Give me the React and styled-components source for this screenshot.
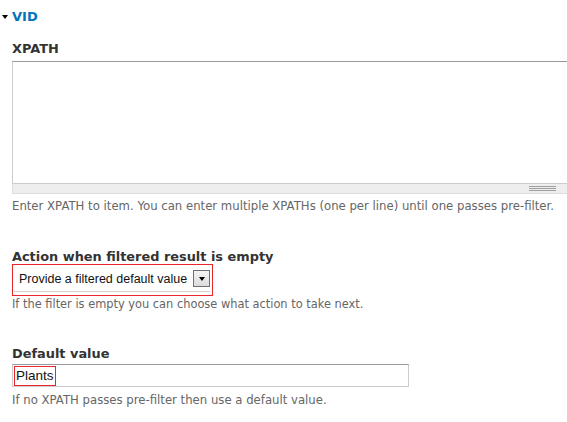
import React from 'react'
import styled, { createGlobalStyle } from 'styled-components'

const GlobalStyle = createGlobalStyle`
  html, body {
    margin: 0;
    padding: 0;
    background: #fff;
    overflow: hidden;
  }
  body {
    font-family: "DejaVu Sans", Verdana, sans-serif;
  }
`;

const Page = styled.div`
  padding: 7px 0 0 2px;
`;

const Legend = styled.div`
  display: flex;
  align-items: center;
  gap: 4px;
  height: 18px;
  color: #0074bd;
  font-size: 13px;
  font-weight: bold;
`;

const Arrow = styled.span`
  width: 0;
  height: 0;
  margin-top: 1px;
  border-left: 3px solid transparent;
  border-right: 3px solid transparent;
  border-top: 4px solid #000;
`;

const FieldsetBody = styled.div`
  padding-left: 10px;
`;

const FormItem = styled.div`
  margin-top: ${props => props.top}px;
`;

const Label = styled.div`
  color: #333;
  font-size: 12.9px;
  font-weight: bold;
  line-height: 14px;
  margin-bottom: ${props => props.gap}px;
`;

const Description = styled.div`
  color: #666;
  font-size: ${props => props.size || 11.7}px;
  line-height: 14px;
  white-space: nowrap;
  margin-top: ${props => props.top}px;
`;

/* the textarea runs on past the right edge of the window, so no right border */
const TextArea = styled.div`
  width: 555px;
  box-sizing: border-box;
  height: 123px;
  border: 1px solid #ccc;
  border-right: none;
  border-top-color: #999;
  background: #fff;
`;

const Grippie = styled.div`
  width: 555px;
  box-sizing: border-box;
  height: 10px;
  background: #eee;
  border: 1px solid #ddd;
  border-top: none;
  border-right: none;
  display: flex;
  justify-content: flex-end;
  align-items: center;
  padding-right: 11px;
`;

const GrippieLines = styled.span`
  width: 27px;
  height: 5px;
  background: repeating-linear-gradient(#a0a0a0 0 1px, transparent 1px 2px);
`;

const SelectFrame = styled.div`
  width: 201px;
  height: 32px;
  box-sizing: border-box;
  border: 1px solid #e8262b;
  padding: 0 2px 3px 1px;
`;

const Select = styled.div`
  height: 27px;
  box-sizing: border-box;
  border-bottom: 1px solid #d4d4d4;
  display: flex;
  align-items: center;
  justify-content: space-between;
  padding: 1px 0 0 5px;
  font-family: "Liberation Sans", Arial, sans-serif;
  font-size: 12.5px;
  color: #111;
  white-space: nowrap;
`;

const SelectButton = styled.span`
  flex: none;
  width: 17px;
  height: 17px;
  box-sizing: border-box;
  border: 1px solid #707070;
  background: linear-gradient(#f4f4f4, #dcdcdc);
  display: flex;
  align-items: center;
  justify-content: center;
`;

const ButtonArrow = styled.span`
  width: 0;
  height: 0;
  border-left: 3.5px solid transparent;
  border-right: 3.5px solid transparent;
  border-top: 4px solid #000;
`;

const TextInput = styled.div`
  width: 397px;
  height: 23px;
  box-sizing: border-box;
  border: 1px solid #ccc;
  border-top-color: #999;
  padding: 1px;
  display: flex;
  font-family: "Liberation Sans", Arial, sans-serif;
  font-size: 13.5px;
  color: #111;
`;

const Highlight = styled.span`
  border: 1px solid #e8262b;
  height: 20px;
  box-sizing: border-box;
  padding: 0 1px;
  line-height: 18px;
`;

export default function App() {
  return (
    <>
      <GlobalStyle />
      <Page>
        <Legend>
          <Arrow />
          <span>VID</span>
        </Legend>
        <FieldsetBody>
          <FormItem top={17}>
            <Label gap={5}>XPATH</Label>
            <TextArea />
            <Grippie>
              <GrippieLines />
            </Grippie>
            <Description top={5}>
              Enter XPATH to item. You can enter multiple XPATHs (one per line) until one passes pre-filter.
            </Description>
          </FormItem>
          <FormItem top={37}>
            <Label gap={0}>Action when filtered result is empty</Label>
            <SelectFrame>
              <Select>
                <span>Provide a filtered default value</span>
                <SelectButton>
                  <ButtonArrow />
                </SelectButton>
              </Select>
            </SelectFrame>
            <Description top={1} size={11.4}>
              If the filter is empty you can choose what action to take next.
            </Description>
          </FormItem>
          <FormItem top={36}>
            <Label gap={3}>Default value</Label>
            <TextInput>
              <Highlight>Plants</Highlight>
            </TextInput>
            <Description top={6}>
              If no XPATH passes pre-filter then use a default value.
            </Description>
          </FormItem>
        </FieldsetBody>
      </Page>
    </>
  )
}
